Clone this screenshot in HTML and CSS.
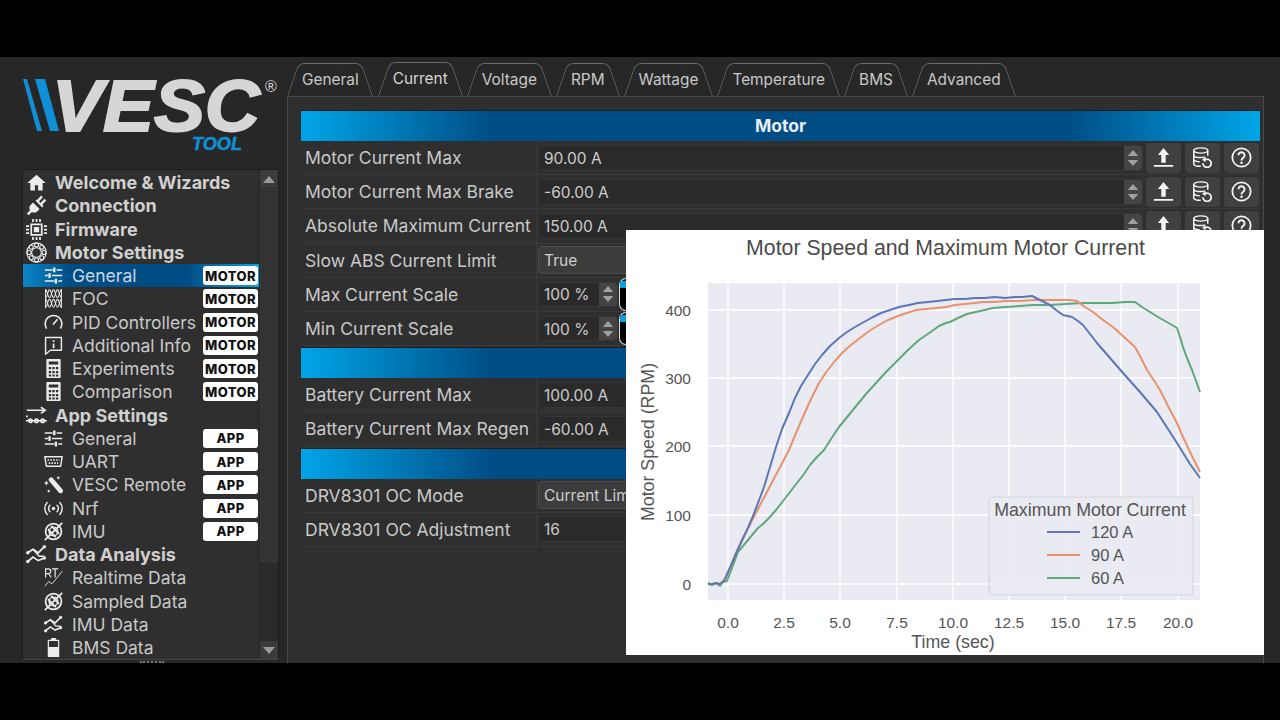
FILE: index.html
```html
<!DOCTYPE html>
<html lang="en">
<head>
<meta charset="utf-8">
<title>VESC Tool</title>
<link rel="stylesheet" href="styles.css">
</head>
<body>
<svg class="defs" width="0" height="0" aria-hidden="true">
  <symbol id="i-home" viewBox="0 0 24 24"><path fill="currentColor" d="M12 3 1.500 12.500H5V21h5.200v-6h3.600v6H19v-8.500h3.500z"/></symbol>
  <symbol id="i-plug" viewBox="0 0 24 24"><path fill="currentColor" d="M8 8.500l7.500 7.500-2.500 2.500c-2 2-4.500 2-6.300.8L3 23l-2-2 3.700-3.700C3.400 15.400 3.500 13 5.500 11zM13 5.500l4.300-5 2 2-4.400 4.900 1.800 1.800 4.400-4.900 2 2-4.500 4.800 1.500 1.600-1.600 1.500-7.600-7.600 1.500-1.500z"/></symbol>
  <symbol id="i-chip" viewBox="0 0 24 24"><path fill="none" stroke="currentColor" stroke-width="2" d="M6 6h12v12H6z"/><path fill="currentColor" d="M9 9h6v6H9zM0 7h3.500v2H0zM0 11h3.500v2H0zM0 15h3.500v2H0zM20.500 7H24v2h-3.500zM20.500 11H24v2h-3.500zM20.500 15H24v2h-3.500zM7 0h2v3.500H7zM11 0h2v3.500h-2zM15 0h2v3.500h-2zM7 20.500h2V24H7zM11 20.500h2V24h-2zM15 20.500h2V24h-2z"/></symbol>
  <symbol id="i-bearing" viewBox="0 0 24 24"><g fill="none" stroke="currentColor"><circle cx="12" cy="12" r="11" stroke-width="1.200"/><circle cx="12" cy="12" r="5.500" stroke-width="1.200"/><g stroke-width="1.300"><circle cx="12" cy="3.500" r="2.300"/><circle cx="18" cy="6" r="2.300"/><circle cx="20.500" cy="12" r="2.300"/><circle cx="18" cy="18" r="2.300"/><circle cx="12" cy="20.500" r="2.300"/><circle cx="6" cy="18" r="2.300"/><circle cx="3.500" cy="12" r="2.300"/><circle cx="6" cy="6" r="2.300"/></g></g></symbol>
  <symbol id="i-sliders" viewBox="0 0 24 24"><path fill="none" stroke="currentColor" stroke-width="2" d="M1 5h10M16 5h7M1 12h4M10 12h13M1 19h12M18 19h5"/><path fill="currentColor" d="M11.500 2h3v6h-3zM5.500 9h3v6h-3zM13.500 16h3v6h-3z"/></symbol>
  <symbol id="i-foc" viewBox="0 0 24 24"><g fill="none" stroke="currentColor" stroke-width="1.300"><path d="M2 1c2.500 0 2.500 10 5 10s2.500-10 5-10 2.500 10 5 10 2.500-10 5-10"/><path d="M2 11c2.500 0 2.500-10 5-10s2.500 10 5 10 2.500-10 5-10 2.500 10 5 10"/><path d="M2 13c2.500 0 2.500 10 5 10s2.500-10 5-10 2.500 10 5 10 2.500-10 5-10"/><path d="M2 23c2.500 0 2.500-10 5-10s2.500 10 5 10 2.500-10 5-10 2.500 10 5 10"/><path d="M2 0v24M22 0v24"/></g></symbol>
  <symbol id="i-gauge" viewBox="0 0 24 24"><path fill="none" stroke="currentColor" stroke-width="2" stroke-linecap="round" d="M3 19a10.500 10.500 0 1 1 18 0M12 14l4.500-5.500"/></symbol>
  <symbol id="i-info" viewBox="0 0 24 24"><path fill="none" stroke="currentColor" stroke-width="1.800" stroke-linejoin="round" d="M2 2h20v16H8l-6 5z"/><path fill="currentColor" d="M11 5.500h2.200v2.200H11zM11 9.500h2.200v6H11z"/></symbol>
  <symbol id="i-calc" viewBox="0 0 24 24"><path fill="currentColor" fill-rule="evenodd" d="M4 0h16a1 1 0 0 1 1 1v22a1 1 0 0 1-1 1H4a1 1 0 0 1-1-1V1a1 1 0 0 1 1-1zM6 3v4h12V3zM6 10v3h3v-3zM10.500 10v3h3v-3zM15 10v3h3v-3zM6 15v3h3v-3zM10.500 15v3h3v-3zM15 15v3h3v-3zM6 19.500v2.500h3v-2.500zM10.500 19.500v2.500h3v-2.500zM15 19.500v2.500h3v-2.500z"/></symbol>
  <symbol id="i-app" viewBox="0 0 24 24"><g fill="none" stroke="currentColor" stroke-width="1.800"><path d="M1 6h20M17 2.500 22 6l-5 3.500"/><path d="M0 13h2M0 18h24"/><circle cx="5" cy="18" r="2"/><circle cx="12" cy="18" r="2"/><circle cx="19" cy="18" r="2"/></g></symbol>
  <symbol id="i-uart" viewBox="0 0 24 24"><path fill="none" stroke="currentColor" stroke-width="1.800" stroke-linejoin="round" d="M1 6h22l-2 12H3z"/><path stroke="currentColor" stroke-width="2" stroke-dasharray="2 1.500" d="M4.500 10h15M6 14h12"/></symbol>
  <symbol id="i-wand" viewBox="0 0 24 24"><path fill="none" stroke="currentColor" stroke-width="6" stroke-linecap="round" d="M9 6l12 14"/><path fill="currentColor" d="M3 7l1 2.200 2.200 1-2.200 1L3 13.500l-1-2.300-2.200-1 2.200-1zM18 1l.8 1.700 1.700.8-1.700.8L18 6l-.8-1.700-1.700-.8 1.700-.8zM6 18l.8 1.500 1.500.8-1.500.8L6 22.500l-.8-1.400-1.500-.8 1.500-.8z"/></symbol>
  <symbol id="i-radio" viewBox="0 0 24 24"><circle cx="12" cy="12" r="2.200" fill="currentColor"/><path fill="none" stroke="currentColor" stroke-width="1.800" stroke-linecap="round" d="M7.500 8a6 6 0 0 0 0 8M16.500 8a6 6 0 0 1 0 8M4 4.500a11 11 0 0 0 0 15M20 4.500a11 11 0 0 1 0 15"/></symbol>
  <symbol id="i-gyro" viewBox="0 0 24 24"><g fill="none" stroke="currentColor"><circle cx="12" cy="12" r="10" stroke-width="2.200"/><circle cx="12" cy="12" r="5.500" stroke-width="1.800"/><path stroke-width="2.200" d="M1 23 23 1M5 9l10 10M9 5l10 10"/></g></symbol>
  <symbol id="i-wave" viewBox="0 0 24 24"><g fill="none" stroke="currentColor" stroke-width="2"><path d="M2 10l6-4 6 4 7-7"/><path d="M2 20l6-5 6 4 7-3"/><path d="M8 6l7 8 6 0" stroke-width="1.600"/></g><g fill="currentColor"><circle cx="2" cy="10" r="2"/><circle cx="21" cy="3" r="2"/><circle cx="2" cy="20" r="2"/><circle cx="21" cy="16" r="2"/></g></symbol>
  <symbol id="i-rt" viewBox="0 0 24 24"><path fill="none" stroke="currentColor" stroke-width="1.500" d="M2 12V1h3.500a3 3 0 0 1 0 6H2M6 7l3 5M10 1h8M14 1v11"/><path fill="none" stroke="currentColor" stroke-width="1.100" d="M1 23l5-6 4 3 6-7 7-9"/></symbol>
  <symbol id="i-batt" viewBox="0 0 24 24"><path fill="none" stroke="currentColor" stroke-width="1.500" stroke-linejoin="round" d="M5.500 3h13v20.300h-13z"/><path fill="currentColor" d="M9 0h6v3H9zM5.500 11.500h13V23.500h-13z"/></symbol>
  <symbol id="i-upload" viewBox="0 0 24 24"><path fill="currentColor" d="M12 1 18.500 9H14.500V18H9.500V9H5.500zM1 20.500h22v2.200H1z"/></symbol>
  <symbol id="i-db" viewBox="0 0 24 24"><g fill="none" stroke="currentColor" stroke-width="1.700"><ellipse cx="10" cy="4" rx="8" ry="3"/><path d="M2 4v15c0 1.800 3.600 3 8 3M18 4v6M2 9c0 1.700 3.600 3 8 3 2 0 4-.3 5-.8M2 14c0 1.700 3.600 3 7 3"/><path stroke-width="2" d="M15 14.500a4.700 4.700 0 1 1-2.500 4"/></g><path fill="currentColor" d="M15.500 11.500v6l-4-3z"/></symbol>
  <symbol id="i-help" viewBox="0 0 24 24"><circle cx="12" cy="12" r="10.500" fill="none" stroke="currentColor" stroke-width="2"/><path fill="none" stroke="currentColor" stroke-width="2.200" d="M8.500 9.500a3.500 3.500 0 1 1 5.500 2.800c-1.300.9-2 1.400-2 3"/><circle cx="12" cy="18" r="1.400" fill="currentColor"/></symbol>
  <symbol id="i-up" viewBox="0 0 14 8"><path fill="currentColor" d="M7 0l7 8H0z"/></symbol>
  <symbol id="i-down" viewBox="0 0 14 8"><path fill="currentColor" d="M7 8 0 0h14z"/></symbol>
</svg>

<div class="app">
  <aside class="sidebar">
    <svg class="logo" viewBox="0 0 264 112" aria-label="VESC Tool logo">
      <polygon class="logo-blue" points="1,22 5,22 20,74 15,74"/>
      <polygon class="logo-blue" points="13,22 23,22 37,74 28,74"/>
      <text class="logo-word" x="30" y="74" textLength="208" lengthAdjust="spacingAndGlyphs">VESC</text>
      <text class="logo-tool" x="170" y="93" textLength="50" lengthAdjust="spacingAndGlyphs">TOOL</text>
      <text class="logo-reg" x="243" y="35">®</text>
    </svg>
    <div class="tree">
      <div class="tree-items">
        <div class="item head"><svg class="ic"><use href="#i-home"/></svg><span>Welcome &amp; Wizards</span></div>
        <div class="item head"><svg class="ic"><use href="#i-plug"/></svg><span>Connection</span></div>
        <div class="item head"><svg class="ic"><use href="#i-chip"/></svg><span>Firmware</span></div>
        <div class="item head"><svg class="ic"><use href="#i-bearing"/></svg><span>Motor Settings</span></div>
        <div class="item sub selected"><svg class="ic"><use href="#i-sliders"/></svg><span>General</span><b class="badge">MOTOR</b></div>
        <div class="item sub"><svg class="ic"><use href="#i-foc"/></svg><span>FOC</span><b class="badge">MOTOR</b></div>
        <div class="item sub"><svg class="ic"><use href="#i-gauge"/></svg><span>PID Controllers</span><b class="badge">MOTOR</b></div>
        <div class="item sub"><svg class="ic"><use href="#i-info"/></svg><span>Additional Info</span><b class="badge">MOTOR</b></div>
        <div class="item sub"><svg class="ic"><use href="#i-calc"/></svg><span>Experiments</span><b class="badge">MOTOR</b></div>
        <div class="item sub"><svg class="ic"><use href="#i-calc"/></svg><span>Comparison</span><b class="badge">MOTOR</b></div>
        <div class="item head"><svg class="ic"><use href="#i-app"/></svg><span>App Settings</span></div>
        <div class="item sub"><svg class="ic"><use href="#i-sliders"/></svg><span>General</span><b class="badge">APP</b></div>
        <div class="item sub"><svg class="ic"><use href="#i-uart"/></svg><span>UART</span><b class="badge">APP</b></div>
        <div class="item sub"><svg class="ic"><use href="#i-wand"/></svg><span>VESC Remote</span><b class="badge">APP</b></div>
        <div class="item sub"><svg class="ic"><use href="#i-radio"/></svg><span>Nrf</span><b class="badge">APP</b></div>
        <div class="item sub"><svg class="ic"><use href="#i-gyro"/></svg><span>IMU</span><b class="badge">APP</b></div>
        <div class="item head"><svg class="ic"><use href="#i-wave"/></svg><span>Data Analysis</span></div>
        <div class="item sub"><svg class="ic"><use href="#i-rt"/></svg><span>Realtime Data</span></div>
        <div class="item sub"><svg class="ic"><use href="#i-gyro"/></svg><span>Sampled Data</span></div>
        <div class="item sub"><svg class="ic"><use href="#i-wave"/></svg><span>IMU Data</span></div>
        <div class="item sub"><svg class="ic"><use href="#i-batt"/></svg><span>BMS Data</span></div>
      </div>
      <div class="scrollbar">
        <div class="sb-btn"><svg class="sb-arrow"><use href="#i-up"/></svg></div>
        <div class="sb-handle"></div>
        <div class="sb-track"></div>
        <div class="sb-btn"><svg class="sb-arrow"><use href="#i-down"/></svg></div>
      </div>
    </div>
    <div class="splitter"></div>
  </aside>

  <main class="main">
    <nav class="tabs">
      <div class="tab">General</div>
      <div class="tab active">Current</div>
      <div class="tab">Voltage</div>
      <div class="tab">RPM</div>
      <div class="tab">Wattage</div>
      <div class="tab">Temperature</div>
      <div class="tab">BMS</div>
      <div class="tab">Advanced</div>
    </nav>
    <section class="panel">
      <h2 class="group">Motor</h2>
      <div class="row"><div class="label">Motor Current Max</div><div class="value"><div class="field"><span class="val">90.00 A</span><div class="spin"><svg class="arrow"><use href="#i-up"/></svg><svg class="arrow"><use href="#i-down"/></svg></div></div><div class="btns"><div class="btn"><svg class="bi"><use href="#i-upload"/></svg></div><div class="btn"><svg class="bi"><use href="#i-db"/></svg></div><div class="btn"><svg class="bi"><use href="#i-help"/></svg></div></div></div></div>
      <div class="row"><div class="label">Motor Current Max Brake</div><div class="value"><div class="field"><span class="val">-60.00 A</span><div class="spin"><svg class="arrow"><use href="#i-up"/></svg><svg class="arrow"><use href="#i-down"/></svg></div></div><div class="btns"><div class="btn"><svg class="bi"><use href="#i-upload"/></svg></div><div class="btn"><svg class="bi"><use href="#i-db"/></svg></div><div class="btn"><svg class="bi"><use href="#i-help"/></svg></div></div></div></div>
      <div class="row"><div class="label">Absolute Maximum Current</div><div class="value"><div class="field"><span class="val">150.00 A</span><div class="spin"><svg class="arrow"><use href="#i-up"/></svg><svg class="arrow"><use href="#i-down"/></svg></div></div><div class="btns"><div class="btn"><svg class="bi"><use href="#i-upload"/></svg></div><div class="btn"><svg class="bi"><use href="#i-db"/></svg></div><div class="btn"><svg class="bi"><use href="#i-help"/></svg></div></div></div></div>
      <div class="row"><div class="label">Slow ABS Current Limit</div><div class="value"><div class="field combo"><span class="val">True</span></div><div class="btns"><div class="btn"><svg class="bi"><use href="#i-upload"/></svg></div><div class="btn"><svg class="bi"><use href="#i-db"/></svg></div><div class="btn"><svg class="bi"><use href="#i-help"/></svg></div></div></div></div>
      <div class="row"><div class="label">Max Current Scale</div><div class="value"><div class="field pct"><span class="val">100 %</span><div class="spin"><svg class="arrow"><use href="#i-up"/></svg><svg class="arrow"><use href="#i-down"/></svg></div></div><div class="bar"><div class="bar-fill"></div></div><div class="btns"><div class="btn"><svg class="bi"><use href="#i-upload"/></svg></div><div class="btn"><svg class="bi"><use href="#i-db"/></svg></div><div class="btn"><svg class="bi"><use href="#i-help"/></svg></div></div></div></div>
      <div class="row"><div class="label">Min Current Scale</div><div class="value"><div class="field pct"><span class="val">100 %</span><div class="spin"><svg class="arrow"><use href="#i-up"/></svg><svg class="arrow"><use href="#i-down"/></svg></div></div><div class="bar"><div class="bar-fill"></div></div><div class="btns"><div class="btn"><svg class="bi"><use href="#i-upload"/></svg></div><div class="btn"><svg class="bi"><use href="#i-db"/></svg></div><div class="btn"><svg class="bi"><use href="#i-help"/></svg></div></div></div></div>
      <h2 class="group">Battery</h2>
      <div class="row"><div class="label">Battery Current Max</div><div class="value"><div class="field"><span class="val">100.00 A</span><div class="spin"><svg class="arrow"><use href="#i-up"/></svg><svg class="arrow"><use href="#i-down"/></svg></div></div><div class="btns"><div class="btn"><svg class="bi"><use href="#i-upload"/></svg></div><div class="btn"><svg class="bi"><use href="#i-db"/></svg></div><div class="btn"><svg class="bi"><use href="#i-help"/></svg></div></div></div></div>
      <div class="row"><div class="label">Battery Current Max Regen</div><div class="value"><div class="field"><span class="val">-60.00 A</span><div class="spin"><svg class="arrow"><use href="#i-up"/></svg><svg class="arrow"><use href="#i-down"/></svg></div></div><div class="btns"><div class="btn"><svg class="bi"><use href="#i-upload"/></svg></div><div class="btn"><svg class="bi"><use href="#i-db"/></svg></div><div class="btn"><svg class="bi"><use href="#i-help"/></svg></div></div></div></div>
      <h2 class="group">DRV8301</h2>
      <div class="row"><div class="label">DRV8301 OC Mode</div><div class="value"><div class="field combo"><span class="val">Current Limit</span></div><div class="btns"><div class="btn"><svg class="bi"><use href="#i-upload"/></svg></div><div class="btn"><svg class="bi"><use href="#i-db"/></svg></div><div class="btn"><svg class="bi"><use href="#i-help"/></svg></div></div></div></div>
      <div class="row"><div class="label">DRV8301 OC Adjustment</div><div class="value"><div class="field"><span class="val">16</span><div class="spin"><svg class="arrow"><use href="#i-up"/></svg><svg class="arrow"><use href="#i-down"/></svg></div></div><div class="btns"><div class="btn"><svg class="bi"><use href="#i-upload"/></svg></div><div class="btn"><svg class="bi"><use href="#i-db"/></svg></div><div class="btn"><svg class="bi"><use href="#i-help"/></svg></div></div></div></div>
    </section>
  </main>
</div>

<figure class="overlay">
  <svg class="chart" viewBox="626 230 638 425" width="638" height="425">
    <text class="c-title" x="945.500" y="255">Motor Speed and Maximum Motor Current</text>
    <rect class="c-plot" x="708" y="283" width="492" height="317"/>
    <path class="c-grid" d="M728 283V600M784 283V600M840 283V600M897 283V600M953 283V600M1009 283V600M1065 283V600M1121 283V600M1178 283V600M708 310H1200M708 378H1200M708 446H1200M708 515H1200M708 584H1200"/>
    <polyline class="c-line c-green" points="708,583 712,585 716,583 720,586 723,582 727,581 732,568 738,552 743,546 748,540 753,534 758,528 763,524 769,518 776,510 783,501 790,492 797,483 804,474 810,465 817,457 824,450 831,439 839,427 848,416 857,405 866,394 876,383 886,372 897,361 908,350 919,340 932,331 939,326 946,323 950,322 958,318 967,314 980,311 993,308 1005,307 1020,306 1033,305 1050,305 1065,304 1083,303 1098,303 1112,303 1125,302 1135,302 1142,307 1150,312 1158,317 1165,321 1172,325 1177,328 1180,337 1183,347 1187,358 1192,370 1196,381 1200,392"/>
    <polyline class="c-line c-orange" points="708,584 720,584 726,578 731,565 736,553 742,541 748,528 758,509 768,490 778,471 789,450 796,433 803,417 811,399 819,383 827,371 835,361 843,352 851,345 860,338 869,331 879,325 888,320 898,316 907,313 916,310 926,309 936,308 946,307 955,305 965,304 975,303 983,302 995,302 1005,301 1020,301 1033,300 1050,300 1060,300 1070,300 1077,301 1085,307 1093,312 1103,320 1113,327 1124,337 1135,347 1141,358 1147,370 1153,379 1160,390 1168,406 1177,423 1183,437 1190,452 1200,472"/>
    <polyline class="c-line c-blue" points="708,584 712,584 716,583 720,584 724,581 728,572 733,561 738,549 743,538 748,528 753,516 758,503 764,487 770,467 776,447 782,429 789,413 795,398 801,386 808,375 815,364 822,355 830,346 839,338 847,332 855,327 864,322 873,317 881,313 890,310 899,307 909,305 918,303 928,302 937,301 946,300 955,299 965,299 975,298 985,298 995,297 1005,298 1015,297 1022,297 1032,296 1038,299 1044,302 1050,305 1056,310 1063,315 1072,317 1078,321 1083,325 1090,334 1097,343 1110,358 1123,373 1140,392 1157,412 1168,429 1177,443 1190,464 1200,478"/>
    <text class="c-tick end" x="691" y="315.500">400</text>
    <text class="c-tick end" x="691" y="383.500">300</text>
    <text class="c-tick end" x="691" y="451.500">200</text>
    <text class="c-tick end" x="691" y="520.500">100</text>
    <text class="c-tick end" x="691" y="589.500">0</text>
    <text class="c-tick mid" x="728" y="628">0.0</text>
    <text class="c-tick mid" x="784" y="628">2.5</text>
    <text class="c-tick mid" x="840" y="628">5.0</text>
    <text class="c-tick mid" x="897" y="628">7.5</text>
    <text class="c-tick mid" x="953" y="628">10.0</text>
    <text class="c-tick mid" x="1009" y="628">12.5</text>
    <text class="c-tick mid" x="1065" y="628">15.0</text>
    <text class="c-tick mid" x="1121" y="628">17.5</text>
    <text class="c-tick mid" x="1178" y="628">20.0</text>
    <text class="c-label mid" x="953" y="648">Time (sec)</text>
    <text class="c-label mid" transform="translate(654 442) rotate(-90)">Motor Speed (RPM)</text>
    <rect class="c-legend" x="989" y="497" width="204" height="98" rx="3"/>
    <text class="c-label mid" x="1090" y="516">Maximum Motor Current</text>
    <path class="c-key c-blue" d="M1047 532H1080"/>
    <path class="c-key c-orange" d="M1047 555H1080"/>
    <path class="c-key c-green" d="M1047 578H1080"/>
    <text class="c-entry" x="1091" y="538">120 A</text>
    <text class="c-entry" x="1091" y="561">90 A</text>
    <text class="c-entry" x="1091" y="584">60 A</text>
  </svg>
</figure>
</body>
</html>
```

FILE: styles.css
```css
* { box-sizing: border-box; }
html, body { margin: 0; height: 100%; }
body {
  background: #000;
  font-family: Inter, "Noto Sans", "Liberation Sans", sans-serif;
  color: #cfcfcf;
  overflow: hidden;
  padding-top: 57px;
  position: relative;
}
.defs { position: absolute; }
.app { display: flex; height: 606px; background: #272727; }

/* sidebar */
.sidebar { width: 286px; flex: none; padding-left: 22px; display: flex; flex-direction: column; }
.logo { width: 264px; height: 112px; display: block; flex: none; }
.logo-blue { fill: #0f8fd6; }
.logo-word { font-family: "Liberation Sans", sans-serif; font-weight: 700; font-style: italic; font-size: 72px; fill: #d6d6d6; stroke: #d6d6d6; stroke-width: 2px; }
.logo-tool { font-family: "Liberation Sans", sans-serif; font-weight: 700; font-style: italic; font-size: 18px; fill: #0f8fd6; stroke: #0f8fd6; stroke-width: .5px; }
.logo-reg { font-family: "Liberation Sans", sans-serif; font-size: 16px; fill: #d6d6d6; }
.tree { width: 257px; height: 491px; display: flex; background: #2f2f2f; border: 1px solid #1c1c1c; border-bottom-color: #444; flex: none; }
.tree-items { flex: 1; min-width: 0; overflow: hidden; padding-top: 1px; }
.item { height: 23.250px; display: flex; align-items: center; font-size: 18px; color: #c9c9c9; white-space: nowrap; }
.head { padding-left: 3px; font-weight: 700; font-size: 18px; color: #d0d0d0; }
.head .ic { width: 21px; height: 21px; flex: none; margin-right: 8px; }
.sub { padding-left: 21px; font-size: 17.500px; }
.sub .ic { width: 19px; height: 19px; flex: none; margin-right: 9px; }
.ic { color: #ececec; }
.selected { background: linear-gradient(90deg, #0a86c8 0%, #004d85 20%, #004d85 70%, #00a5e8 100%); color: #c9d6e2; }
.badge { margin-left: auto; margin-right: 1px; width: 55px; height: 19px; flex: none; display: flex; align-items: center; justify-content: center; background: #fff; color: #111; border-radius: 3px; font-size: 13px; font-weight: 800; letter-spacing: .4px; }
.scrollbar { width: 19px; flex: none; display: flex; flex-direction: column; background: #2a2a2a; border-left: 1px solid #262626; }
.sb-btn { height: 18px; flex: none; display: flex; align-items: center; justify-content: center; background: #3b3b3b; color: #9a9a9a; }
.sb-arrow { width: 12px; height: 7px; }
.sb-handle { height: 373px; flex: none; margin-top: 1px; background: #333; border: 1px solid #3a3a3a; }
.sb-track { flex: 1; }
.splitter { width: 24px; height: 2px; margin: 1px 0 0 118px; border-top: 2px dotted #777; }

/* main */
.main { flex: 1; min-width: 0; display: flex; flex-direction: column; }
.tabs { height: 39px; flex: none; display: flex; margin-left: -1px; }
.tab { position: relative; padding: 15px 17px 0; font-size: 15.400px; line-height: 16px; color: #c9c9c9; white-space: nowrap; }
.tab.active { padding-top: 14px; color: #d4d4d4; }
.tab::before, .tab::after { content: ""; position: absolute; top: 6px; bottom: 0; width: 50%; border-top: 1px solid #6c6c6c; }
.tab.active::before, .tab.active::after { top: 5px; }
.tab::before { left: 2px; border-left: 1px solid #6c6c6c; border-top-left-radius: 6px; transform: skewX(-19deg); transform-origin: bottom left; }
.tab::after { right: 2px; border-right: 1px solid #6c6c6c; border-top-right-radius: 6px; transform: skewX(19deg); transform-origin: bottom right; }
.panel { flex: 1; margin: 0 16px 0 1px; padding: 13px 3px 0 13px; background: #2f2f2f; border: 1px solid #4a4a4a; border-bottom: 0; }
.group { margin: 0; height: 31px; padding-bottom: 1px; display: flex; align-items: center; justify-content: center; font-size: 17.500px; font-weight: 700; color: #e8eef4; background: linear-gradient(90deg, #00a5e8 0%, #004d85 20%, #004d85 80%, #00a5e8 100%); border-top: 1px solid #1e1e1e; }
.row + .group { margin-top: 1px; }
.row { height: 34.200px; display: flex; border-bottom: 1px solid #3a3a3a; }
.label { width: 236px; flex: none; padding-left: 4px; display: flex; align-items: center; font-size: 17.500px; color: #c9c9c9; border-right: 1px solid #3a3a3a; white-space: nowrap; }
.value { flex: 1; min-width: 0; padding: 2px 0 2px 1px; display: flex; align-items: center; gap: 3px; }
.field { flex: 1; min-width: 0; height: 26px; padding-left: 5px; display: flex; align-items: center; justify-content: space-between; font-size: 15.500px; background: #2a2a2a; border: 1px solid #363636; border-radius: 3px; color: #cdcdcd; }
.val { padding-top: 1px; }
.combo { height: 28px; background: #3c3c3c; border-color: #4c4c4c; border-radius: 4px; margin-right: 3px; }
.pct { flex: none; width: 80px; height: 25px; }
.spin { width: 18px; height: 100%; display: flex; flex-direction: column; align-items: center; justify-content: center; gap: 4px; background: #444; border-radius: 0 3px 3px 0; color: #a0a0a0; }
.arrow { width: 12px; height: 6px; }
.bar { flex: 1; height: 33px; position: relative; margin-left: -2px; margin-right: 3px; background: #000; border: 1px solid #ddd; border-right: 0; border-radius: 7px 0 0 7px; }
.bar-fill { height: 7px; margin-top: 2px; background: #0a9ee0; }
.btns { display: flex; gap: 4px; flex: none; margin-right: 1px; }
.btn { width: 35px; height: 30px; display: flex; align-items: center; justify-content: center; background: #404040; border-radius: 4px; color: #f4f4f4; }
.bi { width: 21px; height: 21px; }

/* overlay chart */
.overlay { position: absolute; left: 626px; top: 230px; width: 638px; height: 425px; margin: 0; background: #fff; }
.chart { display: block; }
.chart text { font-family: "Liberation Sans", Arial, sans-serif; }
.c-title { font-size: 21.300px; fill: #4a4a4a; text-anchor: middle; }
.c-plot { fill: #e9eaf2; }
.c-grid { stroke: #fff; stroke-width: 1.300; fill: none; }
.c-line { fill: none; stroke-width: 2; stroke-linejoin: round; }
.c-key { fill: none; stroke-width: 2; }
.c-blue { stroke: #5b78b4; }
.c-orange { stroke: #e8926c; }
.c-green { stroke: #5fa87a; }
.c-tick { font-size: 15.500px; fill: #555; }
.c-label { font-size: 17.800px; fill: #555; }
.c-entry { font-size: 16.500px; fill: #555; }
.end { text-anchor: end; }
.mid { text-anchor: middle; }
.c-legend { fill: #e9eaf2; fill-opacity: .85; stroke: #d4d5de; }
```
